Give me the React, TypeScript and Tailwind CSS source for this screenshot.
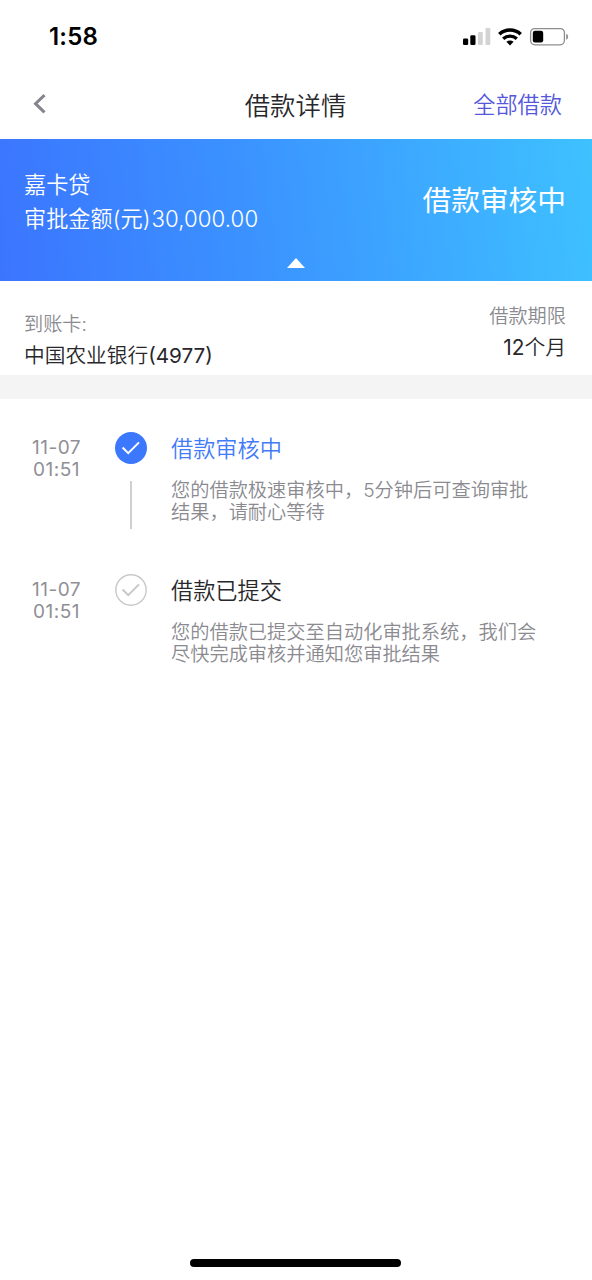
type Step = {
  date: string;
  time: string;
  title: string;
  lines: string[];
  active: boolean;
};

const steps: Step[] = [
  {
    date: "11-07",
    time: "01:51",
    title: "借款审核中",
    lines: ["您的借款极速审核中，5分钟后可查询审批", "结果，请耐心等待"],
    active: true,
  },
  {
    date: "11-07",
    time: "01:51",
    title: "借款已提交",
    lines: ["您的借款已提交至自动化审批系统，我们会", "尽快完成审核并通知您审批结果"],
    active: false,
  },
];

function StatusBar() {
  return (
    <div className="flex h-[72px] shrink-0 items-center justify-between pt-[2px] pr-[23px] pl-[49px]">
      <span className="text-[24px] leading-[30px] font-semibold tracking-[0.2px] text-black">1:58</span>
      <svg className="mb-[1px]" width="107" height="20" viewBox="462 27 107 20" fill="none">
        <rect x="463" y="38.5" width="5.2" height="6.5" rx="1.3" fill="#000" />
        <rect x="470.3" y="35.3" width="5.2" height="9.7" rx="1.3" fill="#000" />
        <rect x="478" y="32" width="4.8" height="13" rx="1.3" fill="#d3d3d3" />
        <rect x="485.5" y="28" width="4.8" height="17" rx="1.3" fill="#d3d3d3" />
        <path d="M499.3 34.2a15.8 15.8 0 0 1 21.4 0" stroke="#000" strokeWidth="3.6" />
        <path d="M503.2 38.8a10 10 0 0 1 13.6 0" stroke="#000" strokeWidth="3.3" />
        <path d="M506.4 41.8a5.8 5.8 0 0 1 7.2 0L510 45.4Z" fill="#000" />
        <rect x="530.6" y="28.6" width="33.8" height="16.2" rx="4.2" stroke="#8e8e8e" strokeWidth="1.3" />
        <rect x="532.8" y="30.7" width="10.4" height="11.7" rx="2.2" fill="#000" />
        <path d="M566.2 33.8c2.6 1 2.6 4.9 0 5.9Z" fill="#8e8e8e" />
      </svg>
    </div>
  );
}

function StepIcon({ active }: { active: boolean }) {
  return (
    <svg width="32" height="32" viewBox="0 0 32 32" fill="none">
      <circle
        cx="16"
        cy="16"
        r={active ? 16 : 15.2}
        fill={active ? "#3b78fd" : "#fff"}
        stroke={active ? "none" : "#c8c8cb"}
        strokeWidth="1.4"
      />
      <path
        d="M7.6 15.5 13.2 21.2 24 10.4"
        stroke={active ? "#fff" : "#c8c8cb"}
        strokeWidth="2"
      />
    </svg>
  );
}

export default function App() {
  return (
    <div className="flex h-[1280px] w-[592px] flex-col overflow-hidden bg-white font-['Inter','Noto_Sans_CJK_SC',sans-serif] font-[350] whitespace-nowrap text-[#28282c]">
      <StatusBar />
      <header className="grid h-[67px] shrink-0 grid-cols-[1fr_auto_1fr] items-center pr-[30px] pb-[2px] pl-[33px]">
        <svg className="mb-[2px]" width="13" height="20" viewBox="0 0 13 20" fill="none">
          <path d="M11.5 1.2 2.5 9.7l9 8.7" stroke="#85858e" strokeWidth="3" />
        </svg>
        <h1 className="mr-[4px] h-[36px] text-[25.4px] leading-[37px] font-[350]">借款详情</h1>
        <span className="h-[34px] justify-self-end text-[22.2px] leading-[34px] text-[#5558dc]">全部借款</span>
      </header>

      <section className="flex h-[142px] shrink-0 flex-col bg-[linear-gradient(83deg,#3b75ff_0%,#3b91ff_40%,#3ec1ff_100%)] text-white">
        <div className="flex h-[119px] justify-between pr-[26px] pl-[24px]">
          <div className="pt-[28px] text-[22.2px] leading-[35px]">
            <p className="h-[34px]">嘉卡贷</p>
            <p className="h-[34px]">审批金额(元)<span className="ml-[1px] tracking-[0.1px]">30,000.00</span></p>
          </div>
          <p className="self-start pt-[42px] text-[28.7px] leading-[40px] font-normal">借款审核中</p>
        </div>
        <svg className="self-center" width="18" height="10" viewBox="0 0 18 10">
          <path d="M9 0 18 10H0Z" fill="#fff" />
        </svg>
      </section>

      <section className="flex h-[94px] shrink-0 justify-between pr-[26px] pl-[24px]">
        <div className="pt-[28px]">
          <p className="h-[31px] text-[19.2px] leading-[31px] text-[#8a8a90]">到账卡:</p>
          <p className="h-[31px] text-[20.7px] leading-[31px]">中国农业银行<span className="font-normal">(4977)</span></p>
        </div>
        <div className="pt-[20px] text-right">
          <p className="h-[31px] text-[19.2px] leading-[31px] text-[#8a8a90]">借款期限</p>
          <p className="h-[31px] text-[20.8px] leading-[31px]"><span className="font-normal">12</span>个月</p>
        </div>
      </section>
      <div className="h-[24px] shrink-0 bg-[#f4f4f4]" />

      <main className="flex flex-col pt-[33px]">
        {steps.map((step) => (
          <article key={step.title} className="flex h-[142px]">
            <div className="w-[115px] pt-[5px] pr-[2px] text-center text-[19px] leading-[22px] font-normal tracking-[0.5px] text-[#8f8f95]">
              <p>{step.date}</p>
              <p>{step.time}</p>
            </div>
            <div className="flex w-[32px] flex-col items-center">
              <StepIcon active={step.active} />
              {step.active && <div className="mt-[17px] h-[48px] w-[2px] bg-[#cfcfd2]" />}
            </div>
            <div className="pl-[24px]">
              <h2 className={`h-[34px] text-[22.2px] leading-[34px] font-[350] ${step.active ? "text-[#427bf8]" : ""}`}>
                {step.title}
              </h2>
              <div className="pt-[13px] text-[19.23px] leading-[22px] text-[#8a8a90]">
                {step.lines.map((line) => (
                  <p key={line} className="h-[22px]">{line}</p>
                ))}
              </div>
            </div>
          </article>
        ))}
      </main>

      <div className="mt-auto mr-[1px] mb-[13px] h-[8px] w-[211px] shrink-0 self-center rounded-full bg-black" />
    </div>
  );
}
